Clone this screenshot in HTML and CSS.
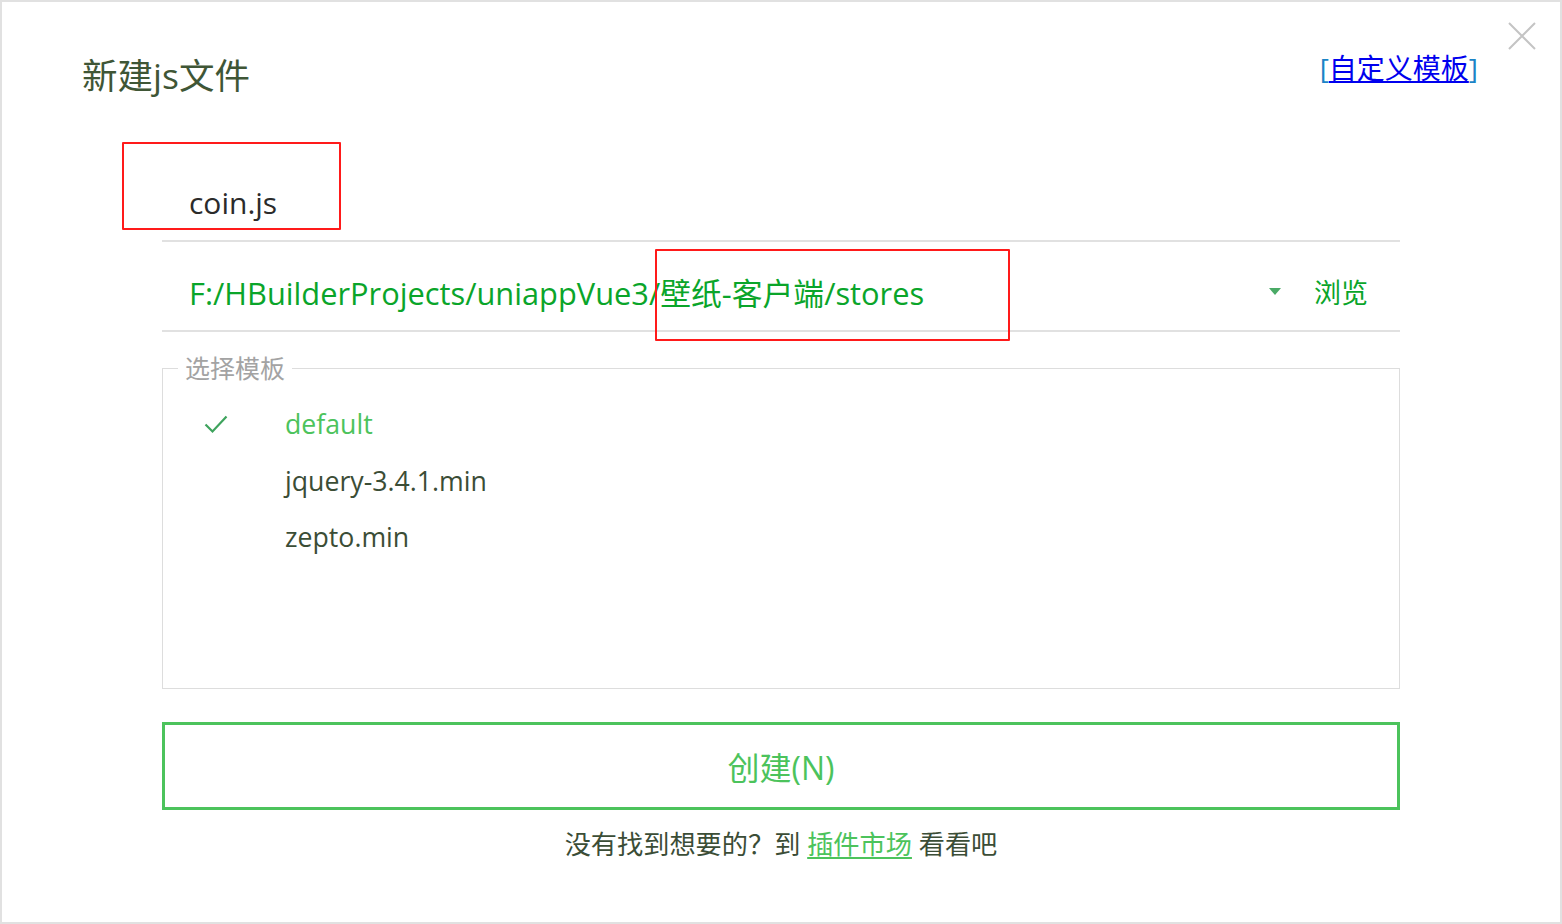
FILE: index.html
```html
<!DOCTYPE html>
<html lang="zh-CN">
<head>
<meta charset="utf-8">
<title>新建js文件</title>
<link rel="stylesheet" href="styles.css">
</head>
<body>
<div class="dialog">
  <div class="close" aria-label="关闭">
    <svg width="28" height="28" viewBox="0 0 28 28"><path d="M1 1 L27 27 M27 1 L1 27" stroke="#c4c4c4" stroke-width="2" fill="none"/></svg>
  </div>
  <header class="header">
    <h1 class="title">新建js文件</h1>
    <div class="custom"><span class="bracket">[</span><a class="custom-link" href="#">自定义模板</a><span class="bracket">]</span></div>
  </header>
  <main class="form">
    <div class="name-row">
      <span class="name">coin.js</span>
      <div class="mark mark-name"></div>
    </div>
    <div class="path-row">
      <span class="path">F:/HBuilderProjects/uniappVue3/壁纸-客户端/stores</span>
      <span class="caret"></span>
      <span class="browse">浏览</span>
      <div class="mark mark-path"></div>
    </div>
    <fieldset class="templates">
      <legend class="legend">选择模板</legend>
      <ul class="tpl-list">
        <li class="tpl active"><span class="check"><svg width="24" height="20" viewBox="0 0 24 20"><path d="M1.5 10.5 L8.5 17.5 L22.5 2.5" stroke="#3ea35d" stroke-width="2.2" fill="none"/></svg></span><span class="tpl-name">default</span></li>
        <li class="tpl"><span class="check"></span><span class="tpl-name">jquery-3.4.1.min</span></li>
        <li class="tpl"><span class="check"></span><span class="tpl-name">zepto.min</span></li>
      </ul>
    </fieldset>
    <button class="create">创建(N)</button>
    <p class="footer">没有找到想要的？到 <a class="market" href="#">插件市场</a> 看看吧</p>
  </main>
</div>
</body>
</html>
```

FILE: styles.css
```css
html, body {
  margin: 0;
  padding: 0;
  background: #ffffff;
}
body {
  font-family: "Open Sans", "Noto Sans CJK SC", sans-serif;
  color: #3b4d36;
}
.dialog {
  position: relative;
  box-sizing: border-box;
  width: 1562px;
  height: 924px;
  border: 2px solid #e1e1e1;
  background: #fff;
}
.close {
  position: absolute;
  top: 20px;
  right: 24px;
  width: 28px;
  height: 28px;
}
.close svg { display: block; }
.header {
  display: flex;
  justify-content: space-between;
  align-items: flex-start;
  padding: 52px 82px 0 80px;
  height: 42px;
}
.title {
  margin: 0;
  font-weight: normal;
  font-size: 35.5px;
  line-height: 42px;
  color: #3f5636;
}
.custom {
  font-size: 28px;
  line-height: 32px;
  margin-top: -2px;
}
.bracket {
  color: #1b84c6;
}
.custom-link {
  color: #0000ee;
  text-decoration: underline;
  text-underline-offset: 2px;
}
.form {
  margin: 0 160px;
}
.name-row {
  position: relative;
  height: 146px;
  display: flex;
  align-items: flex-end;
  padding-left: 27px;
  border-bottom: 2px solid #e1e1e1;
  box-sizing: border-box;
}
.name {
  font-size: 30px;
  line-height: 40px;
  margin-bottom: 17px;
  color: #2b2b2b;
}
.mark {
  position: absolute;
  border: 2px solid #ff1a1a;
  border-radius: 1px;
}
.mark-name {
  left: -40px;
  top: 46px;
  width: 215px;
  height: 84px;
}
.path-row {
  position: relative;
  height: 90px;
  display: flex;
  align-items: center;
  padding: 0 32px 0 27px;
  border-bottom: 2px solid #e1e1e1;
  box-sizing: border-box;
}
.path {
  flex: 1;
  font-size: 30.8px;
  line-height: 40px;
  color: #0aa52a;
  padding-top: 14px;
}
.caret {
  width: 0;
  height: 0;
  border-left: 6px solid transparent;
  border-right: 6px solid transparent;
  border-top: 7px solid #4aaa66;
  margin-right: 33px;
  margin-top: 10px;
}
.browse {
  font-size: 27px;
  line-height: 40px;
  color: #0aa52a;
  padding-top: 14px;
}
.mark-path {
  left: 493px;
  top: 7px;
  width: 351px;
  height: 88px;
}
.templates {
  margin: 21px 0 0;
  padding: 0;
  border: 1px solid #dddddd;
  height: 336px;
  box-sizing: border-box;
}
.legend {
  margin-left: 15px;
  padding: 0 7px;
  font-size: 25px;
  line-height: 30px;
  color: #a3a3a3;
}
.tpl-list {
  list-style: none;
  margin: 0;
  padding: 13px 0 0;
}
.tpl {
  display: flex;
  align-items: center;
  height: 56.5px;
}
.check {
  width: 122px;
  padding-left: 41px;
  box-sizing: border-box;
  display: flex;
  align-items: center;
}
.check svg { display: block; }
.tpl-name {
  font-size: 26.7px;
  line-height: 40px;
  color: #3b4d36;
}
.tpl.active .tpl-name {
  color: #4cc35c;
}
.create {
  display: block;
  width: 100%;
  height: 88px;
  margin-top: 33px;
  background: #fff;
  border: 3px solid #4cc35c;
  font-family: "Open Sans", "Noto Sans CJK SC", sans-serif;
  font-size: 32px;
  color: #4cc35c;
  padding: 0;
  cursor: pointer;
}
.footer {
  margin: 14px 0 0;
  text-align: center;
  font-size: 26.2px;
  line-height: 40px;
  color: #3b4d36;
}
.market {
  color: #4cc35c;
  text-decoration: underline;
  text-underline-offset: 3px;
}
```
